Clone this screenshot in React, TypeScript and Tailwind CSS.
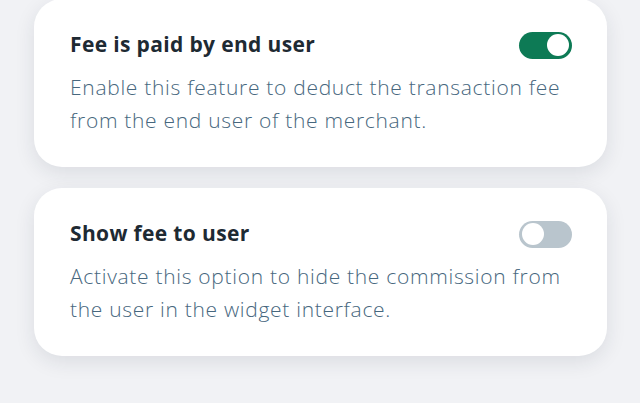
import React, { useState } from 'react';

type SettingProps = {
    title: string;
    description: string;
    enabled: boolean;
    onToggle: () => void;
};

const Toggle = ({ enabled, onToggle }: { enabled: boolean; onToggle: () => void }) => (
    <button
        type="button"
        onClick={onToggle}
        className={`relative shrink-0 w-[53px] h-[27px] rounded-full transition-colors ${enabled ? 'bg-[#0d7a55]' : 'bg-[#b9c5cd]'}`}
    >
        <span
            className={`absolute top-[2.5px] size-[22px] rounded-full bg-white transition-all ${enabled ? 'left-[28px]' : 'left-[3px]'}`}
        />
    </button>
);

const SettingCard = ({ title, description, enabled, onToggle }: SettingProps) => (
    <div className="bg-white rounded-[28px] pl-[36px] pr-[35px] pt-[32px] pb-[30px] shadow-[0_6px_20px_rgba(30,40,60,0.10)]">
        <div className="flex items-center justify-between h-[28px]">
            <h3 className="text-[21px] font-bold text-[#1e2a33] tracking-[0.35px]" style={{ fontFamily: '"Open Sans", sans-serif' }}>
                {title}
            </h3>
            <Toggle enabled={enabled} onToggle={onToggle} />
        </div>
        <p className="mt-[12px] text-[21px] leading-[33px] text-[#47677e] tracking-[0.7px]" style={{ fontFamily: '"Open Sans", sans-serif', fontWeight: 300 }}>
            {description}
        </p>
    </div>
);

export default function App() {
    const [feePaid, setFeePaid] = useState(true);
    const [showFee, setShowFee] = useState(false);

    return (
        <div className="w-[640px] h-[403px] overflow-hidden bg-[#f1f2f5]">
            <div className="flex flex-col gap-[21px] pl-[34px] pr-[33px] -mt-[1px]">
                <SettingCard
                    title="Fee is paid by end user"
                    description="Enable this feature to deduct the transaction fee from the end user of the merchant."
                    enabled={feePaid}
                    onToggle={() => setFeePaid(v => !v)}
                />
                <SettingCard
                    title="Show fee to user"
                    description="Activate this option to hide the commission from the user in the widget interface."
                    enabled={showFee}
                    onToggle={() => setShowFee(v => !v)}
                />
            </div>
        </div>
    );
}
